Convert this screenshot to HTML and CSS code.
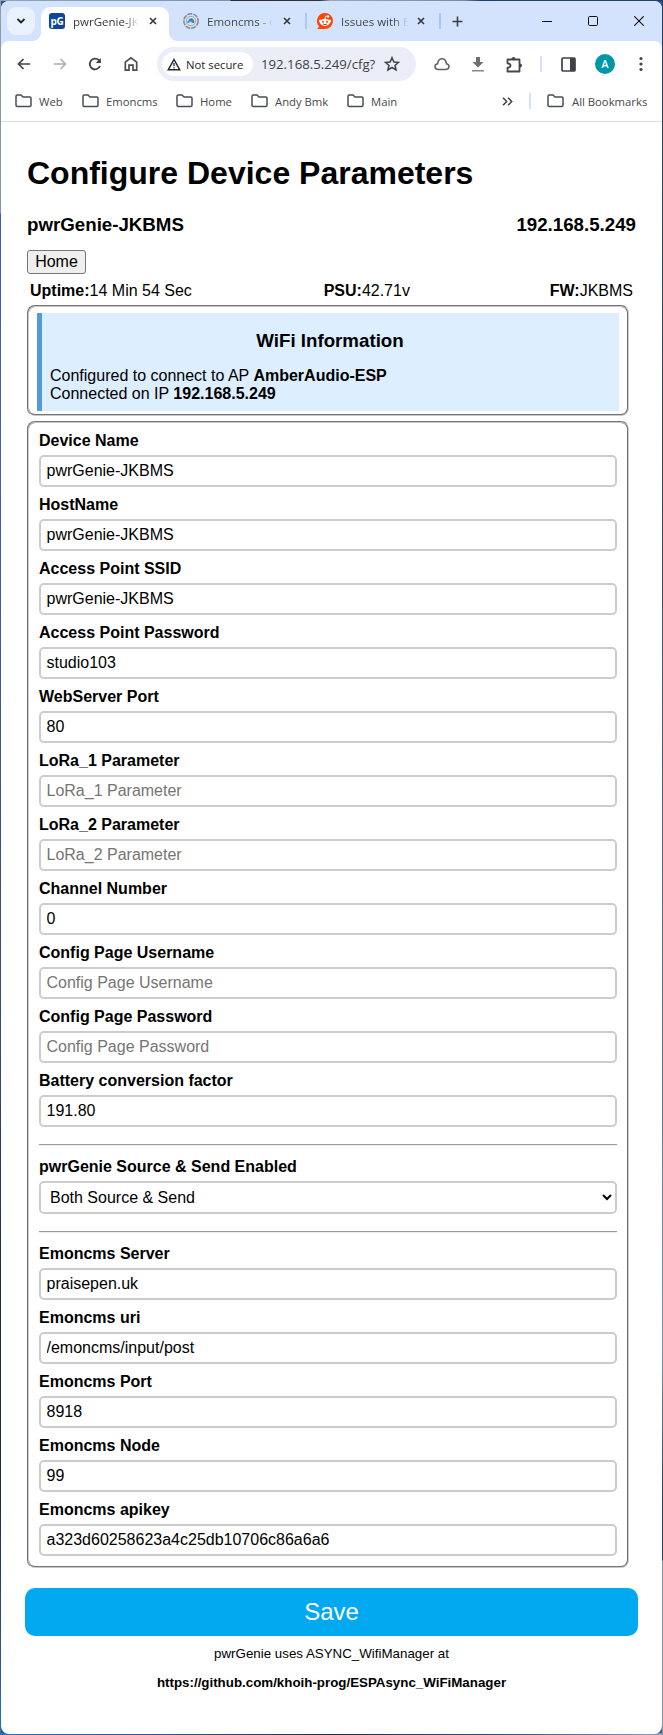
FILE: index.html
```html
<!DOCTYPE html>
<html lang="en">
<head>
<meta charset="utf-8">
<title>pwrGenie-JKBMS</title>
<link rel="stylesheet" href="styles.css">
</head>
<body>
<svg width="0" height="0" class="defs">
  <symbol id="folder" viewBox="0 0 17 14"><path d="M1 2.2Q1 1 2.2 1H6L8 3H14.800Q16 3 16 4.200V11.300Q16 12.500 14.800 12.500H2.200Q1 12.500 1 11.300Z" fill="none" stroke="#4a4d51" stroke-width="1.5"/></symbol>
  <symbol id="close" viewBox="0 0 8 8"><path d="M1 1L7 7M7 1L1 7" fill="none" stroke="#33363a" stroke-width="1.6"/></symbol>
</svg>
<div class="window">
  <header class="tabs">
    <div class="tab-search"><svg width="10" height="6" viewBox="0 0 10 6"><path d="M1.500 1L5 4.500L8.500 1" fill="none" stroke="#222" stroke-width="1.800"/></svg></div>
    <div class="tab active">
      <div class="fav-pg">pG</div>
      <span class="title t1">pwrGenie-JK</span>
      <svg class="x" width="8" height="8"><use href="#close"/></svg>
    </div>
    <div class="tab second">
      <svg width="16" height="16" viewBox="0 0 16 16"><circle cx="8" cy="8" r="7.200" fill="none" stroke="#85898d" stroke-width="1.500" stroke-dasharray="5 1"/><circle cx="8" cy="8" r="4.700" fill="#dfe3e6" stroke="#a2a6aa"/><path d="M4.500 10Q4 8 5.500 7.500Q6 5 8.500 5.200Q11.300 5.500 11.300 10Z" fill="#2f86c4"/><path d="M5.500 10Q6 8 8 8.200L9.500 10Z" fill="#b5cfe0"/></svg>
      <span class="title t2">Emoncms - c</span>
      <svg class="x" width="8" height="8"><use href="#close"/></svg>
    </div>
    <i class="tab-sep"></i>
    <div class="tab third">
      <svg width="16" height="16" viewBox="0 0 16 16"><path d="M8 0A8 8 0 0 1 8 16H.8Q0 16 .6 15.300L2.300 13.600A8 8 0 0 1 8 0Z" fill="#ff4500"/><ellipse cx="8" cy="9.300" rx="5" ry="3.600" fill="#fff"/><circle cx="3.300" cy="8" r="1.500" fill="#fff"/><circle cx="12.700" cy="8" r="1.500" fill="#fff"/><circle cx="11" cy="3.500" r="1.200" fill="#fff"/><path d="M8 6L8.800 3L11 3.500" fill="none" stroke="#fff" stroke-width=".8"/><circle cx="6" cy="8.800" r="1" fill="#ff4500"/><circle cx="10" cy="8.800" r="1" fill="#ff4500"/><path d="M6 11Q8 12.200 10 11" fill="none" stroke="#333" stroke-width=".8"/></svg>
      <span class="title t3">Issues with E</span>
      <svg class="x" width="8" height="8"><use href="#close"/></svg>
    </div>
    <i class="tab-sep"></i>
    <svg class="plus" width="11" height="11" viewBox="0 0 11 11"><path d="M5.500 .5V10.500M.5 5.500H10.500" stroke="#3a3d41" stroke-width="1.600"/></svg>
    <div class="win-controls">
      <svg width="10" height="10" viewBox="0 0 10 10"><path d="M0 5.500H10" stroke="#111"/></svg>
      <svg width="10" height="10" viewBox="0 0 10 10"><rect x=".5" y=".5" width="9" height="9" rx="1.200" fill="none" stroke="#111"/></svg>
      <svg width="10" height="10" viewBox="0 0 10 10"><path d="M.3 .3L9.700 9.700M9.700 .3L.3 9.700" stroke="#111" stroke-width="1.100"/></svg>
    </div>
  </header>

  <nav class="toolbar">
    <svg class="back" width="14" height="12" viewBox="0 0 14 12"><path d="M13 6H1.500M6.500 1L1.500 6L6.500 11" fill="none" stroke="#3f4246" stroke-width="1.700"/></svg>
    <svg class="forward" width="14" height="12" viewBox="0 0 14 12"><path d="M1 6H12.500M7.500 1L12.500 6L7.500 11" fill="none" stroke="#a9abad" stroke-width="1.500"/></svg>
    <svg class="reload" width="14" height="14" viewBox="0 0 14 14"><path d="M12 9A5.300 5.300 0 1 1 10.800 3.200L12.300 5" fill="none" stroke="#3f4246" stroke-width="1.800"/><path d="M12.800 1V6H7.800Z" fill="#3f4246"/></svg>
    <svg class="home" width="14" height="16" viewBox="0 0 14 16"><path d="M1.300 14.200V6.200L7 1.800L12.700 6.200V14.200H9V9.200H5V14.200Z" fill="none" stroke="#4a4d51" stroke-width="1.700"/></svg>
    <div class="address">
      <div class="chip"><svg width="14" height="13" viewBox="0 0 14 13"><path d="M7 1.500L12.800 11.800H1.200Z" fill="none" stroke="#26292d" stroke-width="1.500"/><path d="M7 5V8.300M7 9.200V10.600" stroke="#26292d" stroke-width="1.300"/></svg><span class="chip-text">Not secure</span></div>
      <span class="url">192.168.5.249/cfg?</span>
      <svg class="star" width="16" height="16" viewBox="0 0 16 16"><path d="M8 1.700L9.900 6L14.500 6.400L11 9.400L12.100 14L8 11.500L3.900 14L5 9.400L1.500 6.400L6.100 6Z" fill="none" stroke="#3f4246" stroke-width="1.500"/></svg>
    </div>
    <svg class="cloud" width="16" height="14" viewBox="0 0 16 14"><path d="M4 12.500Q1 12 1 9.500Q1 7.200 3.500 6.700Q4.300 1.800 8 1.800Q11.700 1.800 12.500 6.700Q15 7.200 15 9.500Q15 12 12 12.500Z" fill="none" stroke="#5f6266" stroke-width="1.600"/></svg>
    <svg class="download" width="12" height="15" viewBox="0 0 12 15"><path d="M4 0H8V5H11.500L6 10.500L.5 5H4Z" fill="#6d6f72"/><path d="M0 13.800H12" stroke="#85878a" stroke-width="1.600"/></svg>
    <svg class="puzzle" width="17" height="17" viewBox="0 0 17 17"><path d="M1.500 3.500H13.500V15.500H1.500V11.700Q4.500 11.500 4.500 9.500Q4.500 7.500 1.500 7.300Z" fill="none" stroke="#44474b" stroke-width="1.800" stroke-linejoin="round"/><path d="M5.500 3A2 2 0 0 1 9.500 3ZM14 7.500A2 2 0 0 1 14 11.500Z" fill="#44474b"/></svg>
    <i class="bar-sep"></i>
    <svg class="panel" width="15" height="15" viewBox="0 0 15 15"><rect x="1" y="1" width="13" height="13" rx="1" fill="none" stroke="#3f4246" stroke-width="1.700"/><path d="M9 1H14V14H9Z" fill="#3f4246"/></svg>
    <div class="avatar">A</div>
    <svg class="dots" width="4" height="16" viewBox="0 0 4 16"><g fill="#44474b"><circle cx="2" cy="2.500" r="1.600"/><circle cx="2" cy="8" r="1.600"/><circle cx="2" cy="13.500" r="1.600"/></g></svg>
  </nav>

  <nav class="bookmarks">
    <div class="bm b1"><svg width="17" height="14"><use href="#folder"/></svg><span>Web</span></div>
    <div class="bm b2"><svg width="17" height="14"><use href="#folder"/></svg><span>Emoncms</span></div>
    <div class="bm b3"><svg width="17" height="14"><use href="#folder"/></svg><span>Home</span></div>
    <div class="bm b4"><svg width="17" height="14"><use href="#folder"/></svg><span>Andy Bmk</span></div>
    <div class="bm b5"><svg width="17" height="14"><use href="#folder"/></svg><span>Main</span></div>
    <svg class="more" width="11" height="9" viewBox="0 0 11 9"><path d="M1 .8L4.700 4.500L1 8.200M6 .8L9.700 4.500L6 8.200" fill="none" stroke="#3f4246" stroke-width="1.500"/></svg>
    <i class="bar-sep"></i>
    <div class="bm b6"><svg width="17" height="14"><use href="#folder"/></svg><span>All Bookmarks</span></div>
  </nav>

  <main>
    <h1>Configure Device Parameters</h1>
    <div class="heading"><h3>pwrGenie-JKBMS</h3><h3>192.168.5.249</h3></div>
    <button class="home-btn">Home</button>
    <div class="status"><span><b>Uptime:</b>14 Min 54 Sec</span><span class="psu"><b>PSU:</b>42.71v</span><span><b>FW:</b>JKBMS</span></div>
    <section class="box wifi-box">
      <div class="wifi">
        <h3>WiFi Information</h3>
        <p>Configured to connect to AP <b>AmberAudio-ESP</b><br>Connected on IP <b>192.168.5.249</b></p>
      </div>
    </section>
    <section class="box form">
      <label>Device Name</label><input value="pwrGenie-JKBMS">
      <label>HostName</label><input value="pwrGenie-JKBMS">
      <label>Access Point SSID</label><input value="pwrGenie-JKBMS">
      <label>Access Point Password</label><input value="studio103">
      <label>WebServer Port</label><input value="80">
      <label>LoRa_1 Parameter</label><input placeholder="LoRa_1 Parameter">
      <label>LoRa_2 Parameter</label><input placeholder="LoRa_2 Parameter">
      <label>Channel Number</label><input value="0">
      <label>Config Page Username</label><input placeholder="Config Page Username">
      <label>Config Page Password</label><input placeholder="Config Page Password">
      <label>Battery conversion factor</label><input value="191.80">
      <hr>
      <label>pwrGenie Source &amp; Send Enabled</label>
      <select><option>Both Source &amp; Send</option></select>
      <hr>
      <label>Emoncms Server</label><input value="praisepen.uk">
      <label>Emoncms uri</label><input value="/emoncms/input/post">
      <label>Emoncms Port</label><input value="8918">
      <label>Emoncms Node</label><input value="99">
      <label>Emoncms apikey</label><input value="a323d60258623a4c25db10706c86a6a6">
    </section>
    <button class="save">Save</button>
    <footer><p>pwrGenie uses ASYNC_WifiManager at</p><p><b>https://github.com/khoih-prog/ESPAsync_WiFiManager</b></p></footer>
  </main>
</div>
</body>
</html>
```

FILE: styles.css
```css
* { box-sizing: border-box; }
html { background: #34548b; }
body {
  margin: 0;
  padding: 1px 1px 1px 1px;
  height: 1735px;
  overflow: hidden;
  background:
    linear-gradient(90deg, #8fa5b8 0, #7d94a8 230px, #30282c 231px, #30343a 320px, #9aa9b8 330px, #7a8a99 465px, #1d4068 480px) 0 0 / 100% 1px no-repeat,
    linear-gradient(90deg, #2372c0 0, #2a5f9e 120px, #272d47 330px, #2f4f86 500px, #8a9dbd 663px) 0 100% / 100% 2px no-repeat,
    linear-gradient(#8c9fae 0, #8296a8 213px, #3262b4 214px, #3c65b2 450px, #34497f 1050px, #242848 1280px, #242848 1500px, #2673c0 1735px) 0 0 / 1px 100% no-repeat,
    linear-gradient(#1d4068 0, #34495e 300px, #3c4046 410px, #66788a 1110px, #7b93a8 1350px, #2e3c60 1500px, #2e3c60 1560px, #8398b0 1561px) 100% 0 / 1px 100% no-repeat;
  color: #000;
  font-family: "Liberation Sans", Arial, sans-serif;
  font-size: 16px;
}
.defs { display: block; position: absolute; }
svg { display: block; flex: none; }
i, .bm, .tab { flex: none; }

.window { height: 1733px; border-radius: 8px; background: #fff; overflow: hidden; }

.tabs, .toolbar, .bookmarks { display: flex; align-items: center; font-family: "Open Sans", sans-serif; font-size: 11.300px; color: #45484c; white-space: nowrap; }
.tabs { height: 48px; margin-bottom: -8px; padding: 0 0 8px 6px; background: #d3e2fd; font-size: 11.500px; }
.tab-search { display: grid; place-items: center; width: 28px; height: 28px; border-radius: 9px; background: #e9f1fe; flex: none; }
.tab { display: flex; align-items: center; height: 34px; }
.tab.active { position: relative; width: 128px; margin: 6px 0 0 6px; padding: 0 0 6px 8px; background: #fff; border-radius: 9px 9px 0 0; }
.tab.active::before, .tab.active::after { content: ""; position: absolute; bottom: 0; width: 8px; height: 8px; }
.tab.active::before { left: -8px; background: radial-gradient(circle at 0 0, transparent 7.5px, #fff 8px); }
.tab.active::after { right: -8px; background: radial-gradient(circle at 100% 0, transparent 7.5px, #fff 8px); }
.tab.active .title { color: #34373b; }
.fav-pg { display: grid; place-items: center; width: 16px; height: 16px; border-radius: 3px; background: #0f469d; color: #fff; font: bold 10px/16px "Open Sans", sans-serif; letter-spacing: -.3px; }
.title { overflow: hidden; -webkit-mask-image: linear-gradient(90deg, #000 78%, transparent 100%); mask-image: linear-gradient(90deg, #000 78%, transparent 100%); }
.t1 { width: 66px; margin-left: 8px; }
.t2 { width: 66px; margin-left: 8px; }
.t3 { width: 67px; margin-left: 8px; }
.t1 + .x, .t2 + .x { margin-left: 10px; }
.t3 + .x { margin-left: 9px; }
.second { width: 108px; margin-left: 14px; }
.third { width: 110px; margin-left: 10px; }
.tab-sep { width: 2px; height: 16px; background: #a8c7fa; margin-left: 14px; }
.third + .tab-sep { margin-left: 12px; }
.plus { margin-left: 11px; }
.win-controls { display: flex; gap: 36px; margin-left: auto; padding-right: 18px; }

.toolbar { position: relative; height: 46px; background: #fff; border-radius: 8px 8px 0 0; padding-left: 16px; }
.forward { margin-left: 22px; }
.reload { margin-left: 21px; }
.home { margin-left: 22px; }
.address { display: flex; align-items: center; width: 259px; height: 34px; margin-left: 19px; padding-left: 5px; background: #ebeef8; border-radius: 17px; }
.chip { display: flex; align-items: center; width: 91px; height: 24px; padding-left: 5px; border-radius: 12px; background: #fff; color: #222528; font-weight: 500; }
.chip-text { margin-left: 5px; }
.url { width: 115px; margin-left: 8px; font-size: 13.200px; color: #3c3f43; }
.star { margin-left: 8px; }
.cloud { margin-left: 18px; }
.download { margin-left: 22px; }
.puzzle { margin-left: 22px; }
.bar-sep { width: 2px; height: 16px; background: #d3e2fd; }
.toolbar .bar-sep { margin-left: 17px; }
.panel { margin-left: 19px; }
.avatar { display: grid; place-items: center; width: 20px; height: 20px; margin-left: 19px; border-radius: 50%; background: #0097a7; color: #fff; font-size: 10.500px; font-weight: 600; }
.dots { margin-left: 24px; }

.bookmarks { height: 35px; padding: 0 0 6px 14px; border-bottom: 1px solid #dcdee0; }
.bm { display: flex; align-items: center; }
.bm span { margin-left: 7px; }
.b1 { width: 67px; }
.b2 { width: 94px; }
.b3 { width: 75px; }
.b4 { width: 96px; }
.more { margin-left: auto; }
.bookmarks .bar-sep { margin-left: 16px; }
.b6 { margin-left: 16px; width: 115px; }
.b6 span { margin-left: 8px; }

main { padding: 33px 26px 0; }
h1, h3, p { margin: 0; }
h1 { font-size: 32px; line-height: 37px; height: 59px; }
h3 { font-size: 18.720px; line-height: 22px; }
.heading { display: flex; justify-content: space-between; height: 36px; }
.home-btn { display: block; width: 59px; height: 24px; padding: 0; font: 16px/20px "Liberation Sans", Arial, sans-serif; color: #000; background: #efefef; border: 1px solid #767676; border-radius: 3px; }
.status { display: flex; justify-content: space-between; height: 31px; padding: 8px 3px 0; line-height: 18px; }
.psu { margin-right: 8px; }
.box { width: 602px; border: 2px groove #c8c8c8; border-radius: 8px; }
.wifi-box { height: 111px; padding: 6px 8px 2px; }
.wifi { height: 98px; padding: 17px 9px 0 8px; background: #dceeff; border-left: 5px solid #5499dd; }
.wifi h3 { text-align: center; height: 37px; }
.wifi p { line-height: 18px; }
.form { height: 1147px; margin-top: 5px; padding: 8px 10px 0; }
label { display: block; height: 24px; line-height: 20px; font-weight: bold; }
input, select { display: block; width: 578px; height: 32px; margin: 0 0 8px; padding: 0 5.500px; border: 2px solid #ccc; border-radius: 5px; background: #fff; color: #000; font: 16px "Liberation Sans", Arial, sans-serif; }
input::placeholder { color: #757575; }
select { height: 33px; padding: 0 0 0 5px; }
hr { height: 2px; margin: 17px 0 11px; border: 0; border-top: 1px solid #9a9a9a; border-bottom: 1px solid #eee; }
.save { display: block; width: 613px; height: 48px; margin: 20px 0 0 -2px; padding: 0; border: 0; border-radius: 10px; background: #02a9f0; color: #fff; font: 24px/48px "Liberation Sans", Arial, sans-serif; }
footer { padding-top: 10px; text-align: center; font-size: 13.333px; line-height: 16px; }
footer p + p { margin-top: 13px; }
```
